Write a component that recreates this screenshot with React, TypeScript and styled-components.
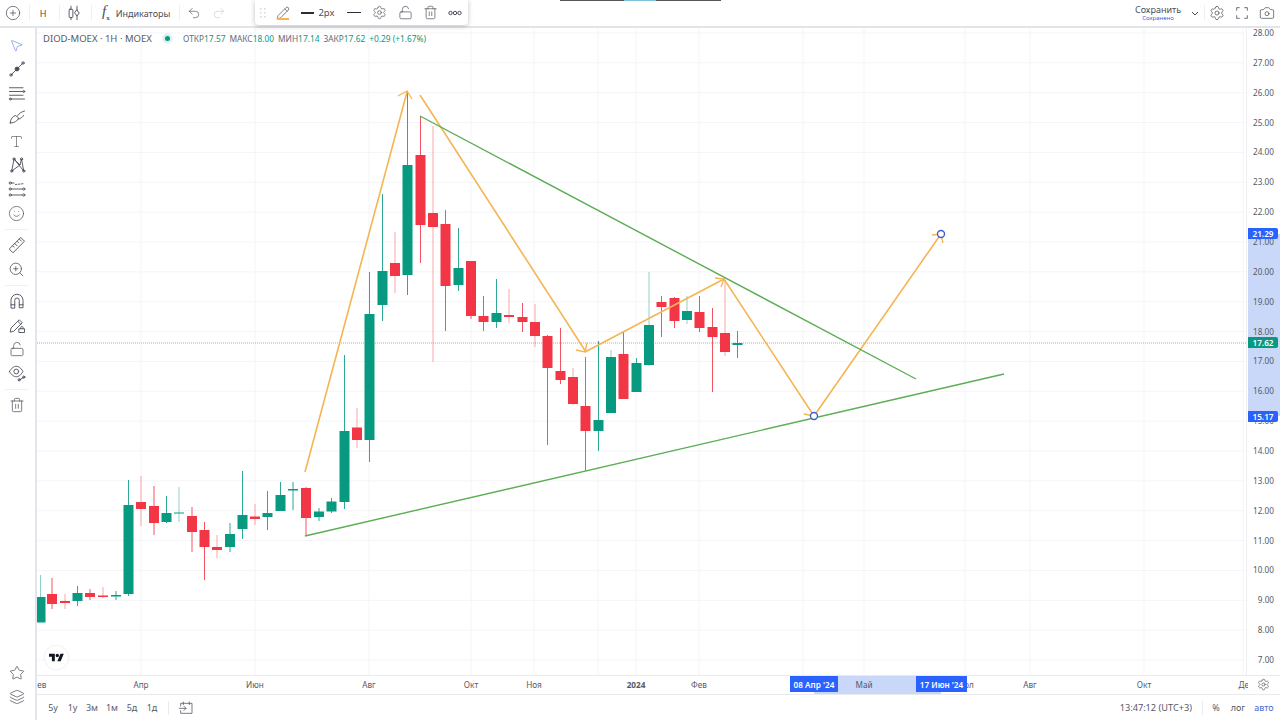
import React from 'react'
import styled, { createGlobalStyle } from 'styled-components'
import {
  Camera,
  CirclePlus,
  Layers,
  LockOpen,
  MousePointer2,
  Pencil,
  Redo2,
  Settings,
  Smile,
  Star,
  Trash2,
  Type,
  Undo2,
  ZoomIn,
} from 'lucide-react'

const GlobalStyle = createGlobalStyle`
  html, body {
    margin: 0;
    padding: 0;
    background: #fff;
  }
  * {
    box-sizing: border-box;
  }
`

const INK = '#4a4e59'
const UP = '#089981'
const DOWN = '#f23645'
const ORANGE = '#f5b553'
const TREND = '#5cad55'
const ANCHOR = '#3f5fd8'
const BAND = '#c9d7f8'
const BLUE = '#2962ff'

const Page = styled.div`
  position: relative;
  width: 1280px;
  height: 720px;
  overflow: hidden;
  display: flex;
  flex-direction: column;
  font-family: 'Noto Sans', 'Open Sans', sans-serif;
  color: ${INK};
  background: #fff;
`
const TopBar = styled.div`
  flex: 0 0 28px;
  display: flex;
  align-items: stretch;
  border-bottom: 2px solid #e3e4e8;
`
const Btn = styled.div<{ $w: number; $pl?: number; $muted?: boolean }>`
  flex: 0 0 ${(p) => p.$w}px;
  display: flex;
  align-items: center;
  justify-content: ${(p) => (p.$pl !== undefined ? 'flex-start' : 'center')};
  padding-left: ${(p) => p.$pl ?? 0}px;
  color: ${(p) => (p.$muted ? '#c8cad0' : INK)};
  font-size: 9px;
`
const Sep = styled.div`
  flex: 0 0 1px;
  margin: 5px 0 5px 3px;
  background: #eff0f3;
`
const Fx = styled.span`
  font-family: 'Liberation Serif', serif;
  font-style: italic;
  font-size: 15px;
  line-height: 1;
  margin-right: 6px;
  sub {
    font-size: 7px;
    font-style: normal;
    font-weight: 700;
  }
`
const Spacer = styled.div`
  flex: 1;
`
const SaveBox = styled.div`
  flex: 0 0 60px;
  display: flex;
  flex-direction: column;
  align-items: center;
  padding-top: 4px;
  font-size: 9px;
  line-height: 11px;
  small {
    font-size: 6px;
    line-height: 6px;
    color: #3f5fd8;
  }
`
const TopEdge = styled.div`
  position: absolute;
  left: 560px;
  top: 0;
  width: 161px;
  height: 1px;
  background: linear-gradient(
    to right,
    #555 0 64px,
    #7fc3de 64px 96px,
    #555 96px 100%
  );
`
const FloatingBar = styled.div`
  position: absolute;
  left: 255px;
  top: 0;
  width: 213px;
  height: 25px;
  display: flex;
  align-items: center;
  background: #fff;
  border-radius: 0 0 4px 4px;
  box-shadow: 0 1px 5px rgba(40, 44, 60, 0.3);
  font-size: 9.5px;
  color: ${INK};
`
const FloatItem = styled.div<{ $w: number }>`
  flex: 0 0 ${(p) => p.$w}px;
  height: 25px;
  display: flex;
  align-items: center;
  justify-content: center;
  gap: 4px;
  position: relative;
`
const Underline = styled.div`
  position: absolute;
  left: 6px;
  right: 6px;
  bottom: 5px;
  height: 2px;
  background: ${ORANGE};
`
const Stroke = styled.div<{ $h: number; $w: number }>`
  width: ${(p) => p.$w}px;
  height: ${(p) => p.$h}px;
  background: #2a2e39;
`
const Main = styled.div`
  flex: 1;
  min-height: 0;
  display: flex;
`
const LeftBar = styled.div`
  flex: 0 0 37px;
  display: flex;
  flex-direction: column;
  align-items: center;
  padding: 5px 2px 11px 0;
  border-right: 2px solid #e3e4ec;
`
const ToolBtn = styled.div<{ $active?: boolean }>`
  flex: 0 0 24px;
  width: 24px;
  display: flex;
  align-items: center;
  justify-content: center;
  color: ${(p) => (p.$active ? '#6f8be8' : INK)};
`
const ToolSep = styled.div`
  flex: 0 0 1px;
  align-self: stretch;
  margin: 4px 4px 3px 5px;
  background: #f0f1f4;
`
const Grow = styled.div`
  flex: 1;
`
const Workspace = styled.div`
  flex: 1;
  min-width: 0;
  display: flex;
  flex-direction: column;
`
const ChartRow = styled.div`
  flex: 0 0 647px;
  display: flex;
`
const Pane = styled.div`
  position: relative;
  flex: 0 0 1209px;
`
const ChartSvg = styled.svg`
  display: block;
  width: 1209px;
  height: 647px;
`
const Legend = styled.div`
  position: absolute;
  left: 6px;
  top: 4px;
  height: 13px;
  display: flex;
  align-items: center;
  white-space: nowrap;
`
const Title = styled.span`
  font-size: 9.5px;
  width: 122px;
  color: #555a66;
`
const LiveDot = styled.span`
  width: 5px;
  height: 5px;
  margin-right: 13px;
  border-radius: 50%;
  background: ${UP};
  box-shadow: 0 0 0 2.5px rgba(8, 153, 129, 0.15);
`
const Ohlc = styled.span`
  font-size: 8.35px;
  margin-right: 4px;
  color: #666a75;
  b {
    font-weight: 400;
    color: ${UP};
  }
`
const Logo = styled.div`
  position: absolute;
  left: 8px;
  bottom: 6px;
  width: 23px;
  height: 23px;
  display: flex;
  align-items: center;
  justify-content: center;
  border-radius: 50%;
  background: #fff;
  box-shadow: 0 0 3px rgba(0, 0, 0, 0.12);
`
const PriceAxis = styled.div`
  position: relative;
  flex: 1;
  display: flex;
  flex-direction: column;
  align-items: flex-end;
  gap: 19.86px;
  padding-right: 6px;
  border-left: 1px solid #eeeff2;
  font-size: 8.2px;
  line-height: 10px;
  color: #555a66;
`
const PriceBand = styled.div<{ $top: number; $height: number }>`
  position: absolute;
  left: 1px;
  right: 0;
  top: ${(p) => p.$top}px;
  height: ${(p) => p.$height}px;
  background: ${BAND};
`
const PriceText = styled.span`
  position: relative;
  height: 10px;
`
const PriceTag = styled.div<{ $top: number; $bg: string }>`
  position: absolute;
  left: 1px;
  top: ${(p) => p.$top}px;
  width: 30px;
  height: 11px;
  display: flex;
  align-items: center;
  justify-content: center;
  background: ${(p) => p.$bg};
  color: #fff;
  font-size: 8.2px;
  font-weight: 600;
  border-radius: 0 2px 2px 0;
`
const TimeAxis = styled.div`
  position: relative;
  flex: 0 0 20px;
  border-top: 1px solid #e9eaee;
  border-bottom: 1px solid #e9eaee;
  font-size: 8.2px;
  color: #555a66;
`
const TimeScale = styled.div`
  position: absolute;
  left: 0;
  top: 0;
  bottom: 0;
  width: 1211px;
  overflow: hidden;
`
const TimeBand = styled.div`
  position: absolute;
  left: 777px;
  width: 127px;
  top: 0;
  bottom: 0;
  background: ${BAND};
`
const Tick = styled.span<{ $bold?: boolean }>`
  position: absolute;
  top: 3px;
  line-height: 11px;
  transform: translateX(-50%);
  font-weight: ${(p) => (p.$bold ? 700 : 400)};
  white-space: nowrap;
`
const TimeTag = styled.div<{ $left: number; $w: number }>`
  position: absolute;
  left: ${(p) => p.$left}px;
  width: ${(p) => p.$w}px;
  top: 0;
  height: 16px;
  display: flex;
  align-items: center;
  justify-content: center;
  background: ${BLUE};
  color: #fff;
  font-size: 8.2px;
  font-weight: 600;
  white-space: nowrap;
`
const AxisGear = styled.div`
  position: absolute;
  right: 10px;
  top: 2px;
  display: flex;
  color: ${INK};
`
const BottomBar = styled.div`
  flex: 1;
  display: flex;
  align-items: center;
  font-size: 9px;
  color: #555a66;
`
const Range = styled.span<{ $w: number }>`
  flex: 0 0 ${(p) => p.$w}px;
  text-align: center;
`
const BottomSep = styled.div`
  flex: 0 0 1px;
  height: 14px;
  background: #e9eaee;
  margin: 0 9px 0 6px;
`
const Clock = styled.span`
  font-size: 9.2px;
  margin-right: 4px;
`
const Auto = styled.span`
  flex: 0 0 32px;
  text-align: center;
  color: #4a6ad0;
`

type IconProps = { size?: number; children: React.ReactNode }
const Icon = ({ size = 18, children }: IconProps) => (
  <svg
    width={size}
    height={size}
    viewBox="0 0 24 24"
    fill="none"
    stroke="currentColor"
    strokeWidth={1.2}
    strokeLinecap="round"
    strokeLinejoin="round"
  >
    {children}
  </svg>
)

const CandlesIcon = () => (
  <Icon>
    <path d="M8 3v4M8 18v3M16 3v5M16 16v5" />
    <rect x="5.5" y="7" width="5" height="11" rx="1" />
    <path d="M16 8l3 4-3 4-3-4z" />
  </Icon>
)
const TrendIcon = () => (
  <Icon>
    <path d="M4 20L20 4" />
    <circle cx="4" cy="20" r="1.6" />
    <circle cx="20" cy="4" r="1.6" />
    <circle cx="12" cy="12" r="2.6" fill="currentColor" />
  </Icon>
)
const FibIcon = () => (
  <Icon>
    <path d="M2 5h18M2 10h18M2 15h18M4 20h18" />
    <circle cx="21" cy="10" r="1.3" />
    <circle cx="3" cy="20" r="1.3" />
  </Icon>
)
const BrushIcon = () => (
  <Icon>
    <path d="M3 20c0-5 3-9 7-10l4 3c-1 4-5 7-11 7z" />
    <path d="M13 10c2-3 5-5 9-6M14 15c3-1 5-3 7-5" />
  </Icon>
)
const PatternIcon = () => (
  <Icon>
    <path d="M5 20L8 4l8 8 2-8 3 16M5 20l11-8M8 4l13 16" />
    <circle cx="8" cy="4" r="1.5" />
    <circle cx="18" cy="4" r="1.5" />
    <circle cx="5" cy="20" r="1.5" />
    <circle cx="21" cy="20" r="1.5" />
  </Icon>
)
const ForecastIcon = () => (
  <Icon>
    <path d="M5 4h3M5 12h14M5 20h14" />
    <path d="M10 6l10-1" strokeDasharray="2 2" />
    <circle cx="3" cy="4" r="1.5" />
    <circle cx="3" cy="12" r="1.5" />
    <circle cx="21" cy="12" r="1.5" />
    <circle cx="3" cy="20" r="1.5" />
    <circle cx="21" cy="20" r="1.5" />
  </Icon>
)
const RulerIcon = () => (
  <Icon>
    <path d="M2 17L17 2l5 5L7 22z" />
    <path d="M6 13l2 2M9 10l3 3M12 7l2 2M15 4l3 3" />
  </Icon>
)
const MagnetIcon = () => (
  <Icon>
    <path d="M4 21V11a8 8 0 0 1 16 0v10h-5V11a3 3 0 0 0-6 0v10z" />
    <path d="M4 17h5M15 17h5" />
  </Icon>
)
const PencilLockIcon = () => (
  <Icon>
    <path d="M3 21l1-5L15 5l4 4L8 20zM13 7l4 4" />
    <rect x="15" y="17" width="7" height="5" />
    <path d="M17 17v-2a1.6 1.6 0 0 1 3 0v2" />
  </Icon>
)
const EyeDrawIcon = () => (
  <Icon>
    <path d="M2 10c3-5 6-7 9-7s6 2 9 7c-3 5-6 7-9 7s-6-2-9-7z" />
    <circle cx="11" cy="10" r="3.2" />
    <path d="M14 22l8-5" />
    <circle cx="15" cy="21" r="1.5" />
    <circle cx="21" cy="17.5" r="1.5" />
  </Icon>
)
const DotsIcon = () => (
  <svg width="14" height="6" viewBox="0 0 14 6" fill="none" stroke="currentColor">
    <circle cx="2.5" cy="3" r="1.7" />
    <circle cx="7" cy="3" r="1.7" />
    <circle cx="11.5" cy="3" r="1.7" />
  </svg>
)
const GripIcon = () => (
  <svg width="6" height="10" viewBox="0 0 6 10" fill="#d4d6dc">
    {[0, 4, 8].map((y) => (
      <React.Fragment key={y}>
        <rect x="0" y={y} width="1.5" height="1.5" />
        <rect x="4" y={y} width="1.5" height="1.5" />
      </React.Fragment>
    ))}
  </svg>
)
const FullscreenIcon = () => (
  <Icon size={16}>
    <path d="M4 8V4h4M16 4h4v4M20 16v4h-4M8 20H4v-4" />
  </Icon>
)
const GoToIcon = () => (
  <Icon size={16}>
    <path d="M4 9V5h17v15H4v-4M8 3v4M17 3v4M2 12.5h10M9 9.5l3 3-3 3" />
  </Icon>
)
const TvLogo = () => (
  <svg width="15" height="12" viewBox="0 0 36 28" fill="#131722">
    <path d="M14 22H7V11H0V4h14v18zM28 22h-8l7.5-18h8L28 22z" />
    <circle cx="20" cy="8" r="4" />
  </svg>
)

// x, wick top, wick bottom, body top, body bottom, rising, faint wick
type Candle = [number, number, number, number, number, boolean, boolean?]
const candles: Candle[] = [
  [40.5, 575, 597, 597, 622.5, true, true],
  [52, 578, 609, 594, 604, false],
  [65, 594, 609, 601, 603, false, true],
  [77.5, 586, 606, 593, 601, true],
  [90, 589, 600, 593, 597, false],
  [103, 587, 598, 595.5, 597, false, true],
  [116, 591, 600, 595, 596.5, true],
  [128.5, 480, 596, 505, 594, true],
  [141, 476, 526, 502, 509, false, true],
  [154, 486, 535, 506, 523, false],
  [166.5, 496, 523, 513, 522, true],
  [179, 487, 522, 512.5, 513.5, true, true],
  [192, 507, 552, 516, 532, false],
  [204.5, 522, 580, 530, 547, false],
  [217, 535, 558, 547, 550, false, true],
  [230, 523, 552, 534, 547, true],
  [242.5, 471, 539, 515, 529, true],
  [255, 504, 525, 516.5, 519, false, true],
  [267.5, 491, 530, 513, 517, true],
  [280.5, 482, 511, 495, 511, true],
  [293, 482, 510, 489, 490.5, true],
  [306, 487, 536, 488, 518, false],
  [319, 508, 521, 511.5, 517, true],
  [331.5, 498, 513, 501.5, 511.5, true],
  [344.5, 355, 509, 431, 502, true],
  [357, 408, 448, 427.5, 440, false, true],
  [369.5, 272, 462, 314, 440, true],
  [382.5, 194, 321, 271, 305, true],
  [395, 232, 293, 263, 276, false, true],
  [407.5, 91, 295, 165, 275, true],
  [420.5, 116, 263, 155, 225, false],
  [433, 126, 362, 213, 227, false, true],
  [445.5, 210, 331, 224, 286, false],
  [458.5, 228, 291, 268, 285, true],
  [471, 261, 319, 261, 316, false],
  [483.5, 296, 331, 316, 322, false],
  [496.5, 279, 328, 313, 322, true],
  [509, 289, 323, 315, 317, false, true],
  [522.5, 303, 332, 317, 322, false],
  [535, 304, 347, 322, 336, false, true],
  [547.5, 335, 445, 336, 368, false],
  [560.5, 328, 384, 371, 380, false],
  [573, 368, 405, 377, 404, false, true],
  [585.5, 357, 471, 406, 431, false],
  [598.5, 341, 451, 420, 431, true],
  [611, 350, 413, 357, 413, true, true],
  [623.5, 331, 399, 354, 399, false],
  [636.5, 358, 392, 363, 392, true],
  [649, 272, 366, 325, 365, true, true],
  [661.5, 296, 337, 302, 307, false],
  [674.5, 297, 328, 298, 321, false],
  [687, 296, 324, 311, 320, true, true],
  [699.5, 296, 332, 312, 328, false],
  [712.5, 308, 392, 327, 337, false],
  [725, 280, 356, 333, 352, false, true],
  [737.5, 331, 358, 343, 345, true],
]

const gridYs = Array.from({ length: 22 }, (_, i) => 33 + i * 29.857)
const prices = gridYs.map((_, i) => (28 - i).toFixed(2))
const gridXs = [141, 255, 369, 471, 534, 598, 636, 699, 803, 864, 965, 1030, 1144, 1243]

// page coordinates, the time axis starts at x = 37
const ticks: { x: number; label: string; bold?: boolean }[] = [
  { x: 38.5, label: 'Фев' },
  { x: 141, label: 'Апр' },
  { x: 255, label: 'Июн' },
  { x: 369, label: 'Авг' },
  { x: 471, label: 'Окт' },
  { x: 534, label: 'Ноя' },
  { x: 636, label: '2024', bold: true },
  { x: 699, label: 'Фев' },
  { x: 864, label: 'Май' },
  { x: 965, label: 'Июл' },
  { x: 1030, label: 'Авг' },
  { x: 1144, label: 'Окт' },
  { x: 1246, label: 'Дек' },
]

const ArrowHead = ({ d }: { d: string }) => <path d={d} stroke={ORANGE} strokeWidth={1.3} fill="none" />

const Chart = () => (
  <ChartSvg viewBox="37 28 1209 647">
    {gridYs.map((y) => (
      <line key={y} x1={37} x2={1246} y1={y} y2={y} stroke="#f4f5f8" />
    ))}
    {gridXs.map((x) => (
      <line key={x} x1={x} x2={x} y1={28} y2={675} stroke="#f4f5f8" />
    ))}
    <line x1={37} x2={1246} y1={343} y2={343} stroke="#7fc7b8" strokeDasharray="1 1" />
    {candles.map(([x, wt, wb, bt, bb, up, faint]) => {
      const color = up ? UP : DOWN
      return (
        <g key={x}>
          <line x1={x} x2={x} y1={wt} y2={wb} stroke={color} strokeOpacity={faint ? 0.45 : 0.85} />
          <rect x={x - 5} y={bt} width={10} height={bb - bt} fill={color} />
        </g>
      )
    })}
    <polyline points="305,472 407,92" stroke={ORANGE} strokeWidth={1.6} fill="none" />
    <ArrowHead d="M398,96 L407,91 L412,99" />
    <polyline points="420,95 586,352" stroke={ORANGE} strokeWidth={1.6} fill="none" />
    <ArrowHead d="M576,350 L585,352 L587,343" />
    <polyline points="585,352 724,279" stroke={ORANGE} strokeWidth={1.6} fill="none" />
    <ArrowHead d="M715,278 L724,279 L721,287" />
    <polyline points="724,279 814,416 941,234" stroke={ORANGE} strokeWidth={1.6} fill="none" />
    <ArrowHead d="M804,414 L814,416 M932,235 L941,234 L943,243" />
    <line x1={420} y1={116} x2={916} y2={379} stroke={TREND} strokeWidth={1.4} />
    <line x1={305} y1={536} x2={1004} y2={374} stroke={TREND} strokeWidth={1.4} />
    <circle cx={814} cy={416} r={3.5} fill="#fff" stroke={ANCHOR} strokeWidth={1.4} />
    <circle cx={941} cy={234} r={3.5} fill="#fff" stroke={ANCHOR} strokeWidth={1.4} />
  </ChartSvg>
)

const App = () => {
  return (
    <>
      <GlobalStyle />
      <Page>
        <TopBar>
          <Btn $w={26}>
            <CirclePlus size={16} strokeWidth={1.1} />
          </Btn>
          <Sep />
          <Btn $w={26}>H</Btn>
          <Sep />
          <Btn $w={28}>
            <CandlesIcon />
          </Btn>
          <Sep />
          <Btn $w={84} $pl={10}>
            <Fx>
              f<sub>x</sub>
            </Fx>
            Индикаторы
          </Btn>
          <Sep />
          <Btn $w={28}>
            <Undo2 size={14} strokeWidth={1.1} />
          </Btn>
          <Btn $w={22} $muted>
            <Redo2 size={14} strokeWidth={1.1} />
          </Btn>
          <Spacer />
          <SaveBox>
            Сохранить
            <small>Сохранено</small>
          </SaveBox>
          <Btn $w={13}>
            <svg width="8" height="5" viewBox="0 0 8 5" fill="none" stroke="currentColor">
              <path d="M1 1l3 3 3-3" />
            </svg>
          </Btn>
          <Sep />
          <Btn $w={24}>
            <Settings size={16} strokeWidth={1.1} />
          </Btn>
          <Btn $w={25}>
            <FullscreenIcon />
          </Btn>
          <Btn $w={26}>
            <Camera size={16} strokeWidth={1.1} />
          </Btn>
        </TopBar>
        <Main>
          <LeftBar>
            <ToolBtn $active>
              <MousePointer2 size={15} strokeWidth={1.1} />
            </ToolBtn>
            <ToolBtn>
              <TrendIcon />
            </ToolBtn>
            <ToolBtn>
              <FibIcon />
            </ToolBtn>
            <ToolBtn>
              <BrushIcon />
            </ToolBtn>
            <ToolBtn>
              <Type size={15} strokeWidth={1} />
            </ToolBtn>
            <ToolBtn>
              <PatternIcon />
            </ToolBtn>
            <ToolBtn>
              <ForecastIcon />
            </ToolBtn>
            <ToolBtn>
              <Smile size={17} strokeWidth={1} />
            </ToolBtn>
            <ToolSep />
            <ToolBtn>
              <RulerIcon />
            </ToolBtn>
            <ToolBtn>
              <ZoomIn size={17} strokeWidth={1.1} />
            </ToolBtn>
            <ToolSep />
            <ToolBtn>
              <MagnetIcon />
            </ToolBtn>
            <ToolBtn>
              <PencilLockIcon />
            </ToolBtn>
            <ToolBtn>
              <LockOpen size={16} strokeWidth={1.1} />
            </ToolBtn>
            <ToolBtn>
              <EyeDrawIcon />
            </ToolBtn>
            <ToolSep />
            <ToolBtn>
              <Trash2 size={16} strokeWidth={1.1} />
            </ToolBtn>
            <Grow />
            <ToolBtn>
              <Star size={16} strokeWidth={1.1} />
            </ToolBtn>
            <ToolBtn>
              <Layers size={16} strokeWidth={1.1} />
            </ToolBtn>
          </LeftBar>
          <Workspace>
            <ChartRow>
              <Pane>
                <Chart />
                <Legend>
                  <Title>DIOD-MOEX · 1H · MOEX</Title>
                  <LiveDot />
                  <Ohlc>
                    ОТКР<b>17.57</b>
                  </Ohlc>
                  <Ohlc>
                    МАКС<b>18.00</b>
                  </Ohlc>
                  <Ohlc>
                    МИН<b>17.14</b>
                  </Ohlc>
                  <Ohlc>
                    ЗАКР<b>17.62</b>
                  </Ohlc>
                  <Ohlc>
                    <b>+0.29 (+1.67%)</b>
                  </Ohlc>
                </Legend>
                <Logo>
                  <TvLogo />
                </Logo>
              </Pane>
              <PriceAxis>
                <PriceBand $top={206} $height={182} />
                {prices.map((p) => (
                  <PriceText key={p}>{p}</PriceText>
                ))}
                <PriceTag $top={200} $bg={BLUE}>
                  21.29
                </PriceTag>
                <PriceTag $top={309} $bg={UP}>
                  17.62
                </PriceTag>
                <PriceTag $top={383} $bg={BLUE}>
                  15.17
                </PriceTag>
              </PriceAxis>
            </ChartRow>
            <TimeAxis>
              <TimeScale>
                <TimeBand />
                {ticks.map((t) => (
                  <Tick key={t.x} $bold={t.bold} style={{ left: t.x - 37 }}>
                    {t.label}
                  </Tick>
                ))}
                <TimeTag $left={753} $w={48}>
                  08 Апр '24
                </TimeTag>
                <TimeTag $left={879} $w={51}>
                  17 Июн '24
                </TimeTag>
              </TimeScale>
              <AxisGear>
                <Settings size={13} strokeWidth={1.2} />
              </AxisGear>
            </TimeAxis>
            <BottomBar>
              <Range $w={6} />
              <Range $w={20}>5y</Range>
              <Range $w={19}>1y</Range>
              <Range $w={20}>3м</Range>
              <Range $w={20}>1м</Range>
              <Range $w={20}>5д</Range>
              <Range $w={20}>1д</Range>
              <BottomSep />
              <GoToIcon />
              <Spacer />
              <Clock>13:47:12 (UTC+3)</Clock>
              <BottomSep />
              <Range $w={8}>%</Range>
              <Range $w={8} />
              <Range $w={20}>лог</Range>
              <Auto>авто</Auto>
            </BottomBar>
          </Workspace>
        </Main>
        <TopEdge />
        <FloatingBar>
          <FloatItem $w={16}>
            <GripIcon />
          </FloatItem>
          <FloatItem $w={24}>
            <Pencil size={14} strokeWidth={1.2} />
            <Underline />
          </FloatItem>
          <FloatItem $w={46}>
            <Stroke $w={13} $h={2} />
            2px
          </FloatItem>
          <FloatItem $w={25}>
            <Stroke $w={14} $h={1} />
          </FloatItem>
          <FloatItem $w={26}>
            <Settings size={15} strokeWidth={1.1} />
          </FloatItem>
          <FloatItem $w={26}>
            <LockOpen size={15} strokeWidth={1.1} />
          </FloatItem>
          <FloatItem $w={24}>
            <Trash2 size={15} strokeWidth={1.1} />
          </FloatItem>
          <FloatItem $w={26}>
            <DotsIcon />
          </FloatItem>
        </FloatingBar>
      </Page>
    </>
  )
}

export default App
